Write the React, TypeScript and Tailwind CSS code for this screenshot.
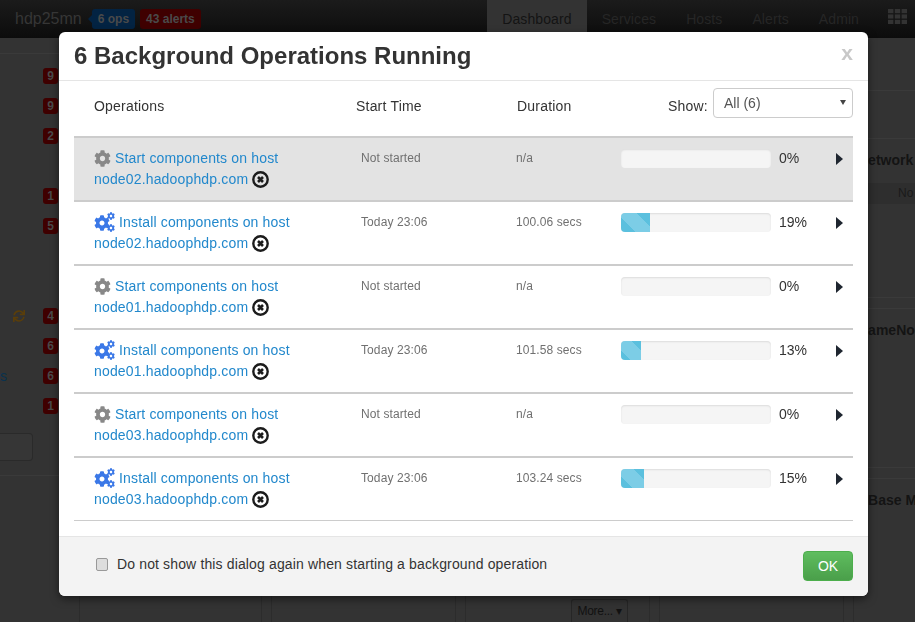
import { FaCog, FaSync } from 'react-icons/fa';

const NAV_ITEMS = ['Dashboard', 'Services', 'Hosts', 'Alerts', 'Admin'];

const OPERATIONS = [
    { kind: 'start', host: 'node02.hadoophdp.com', time: 'Not started', duration: 'n/a', percent: 0 },
    { kind: 'install', host: 'node02.hadoophdp.com', time: 'Today 23:06', duration: '100.06 secs', percent: 19 },
    { kind: 'start', host: 'node01.hadoophdp.com', time: 'Not started', duration: 'n/a', percent: 0 },
    { kind: 'install', host: 'node01.hadoophdp.com', time: 'Today 23:06', duration: '101.58 secs', percent: 13 },
    { kind: 'start', host: 'node03.hadoophdp.com', time: 'Not started', duration: 'n/a', percent: 0 },
    { kind: 'install', host: 'node03.hadoophdp.com', time: 'Today 23:06', duration: '103.24 secs', percent: 15 },
];

const SERVICE_BADGES = [
    { count: 9 },
    { count: 9 },
    { count: 2 },
    {},
    { count: 1 },
    { count: 5 },
    {},
    {},
    { count: 4, refresh: true },
    { count: 6 },
    { count: 6, label: 's' },
    { count: 1 },
];

function InstallIcon() {
    return (
        <span className="relative inline-block w-[21px] h-[20px] align-[-5px] text-[#3b78e7]">
            <FaCog className="absolute left-0 top-[3px] w-[16px] h-[16px]" />
            <FaCog className="absolute left-[13px] top-0 w-[8px] h-[8px]" />
            <FaCog className="absolute left-[13px] top-[12px] w-[8px] h-[8px]" />
        </span>
    );
}

function AbortIcon() {
    return (
        <svg viewBox="0 0 17 17" className="inline-block w-[17px] h-[17px] ml-[4px] align-[-4px]">
            <circle cx="8.5" cy="8.5" r="7.2" fill="none" stroke="#1c1c1c" strokeWidth="2.4" />
            <path d="M6 6l5 5M11 6l-5 5" stroke="#1c1c1c" strokeWidth="2.6" />
        </svg>
    );
}

function OperationRow({ op, index }: { op: (typeof OPERATIONS)[number]; index: number }) {
    return (
        <div className={`grid grid-cols-[287px_155px_105px_158px_57px_1fr] h-[64px] border-t-2 border-[#ccc] pt-[10px] ${index === 0 ? 'bg-[#e3e3e3]' : ''}`}>
            <div className="pl-[20px] text-[14px] leading-[21px] tracking-[0.16px] text-[#2288cc]">
                {op.kind === 'start' ? (
                    <FaCog className="inline-block w-[17px] h-[17px] mr-[4px] align-[-4px] text-[#888]" />
                ) : (
                    <span className="mr-[4px]">
                        <InstallIcon />
                    </span>
                )}
                {op.kind === 'start' ? 'Start components on host' : 'Install components on host'}
                <br />
                {op.host}
                <AbortIcon />
            </div>
            <div className="text-[12px] leading-[21px] tracking-[0.1px] text-[#707070]">{op.time}</div>
            <div className="text-[12px] leading-[21px] tracking-[0.1px] text-[#707070]">{op.duration}</div>
            <div className="mt-[1px] w-[150px] h-[19px] rounded-[4px] bg-[#f5f5f5] shadow-[inset_0_1px_2px_rgba(0,0,0,0.1)] overflow-hidden">
                <div
                    className="h-full bg-[linear-gradient(45deg,#5bc0de_25%,#7ccde6_25%,#7ccde6_50%,#5bc0de_50%,#5bc0de_75%,#7ccde6_75%)] bg-[length:40px_40px] bg-bottom"
                    style={{ width: `${op.percent}%` }}
                />
            </div>
            <div className="text-[14px] leading-[21px] text-[#333]">{op.percent}%</div>
            <div className="pt-[5px]">
                <svg viewBox="0 0 7 12" className="w-[7px] h-[12px]">
                    <path d="M0 0l7 6-7 6z" fill="#1f2630" />
                </svg>
            </div>
        </div>
    );
}

function OperationsDialog() {
    return (
        <div className="fixed inset-0 z-10">
            <div className="mt-[32px] ml-[59px] w-[809px] h-[564px] flex flex-col rounded-[6px] bg-white shadow-[0_3px_9px_rgba(0,0,0,0.5)]">
                <div className="flex items-center justify-between h-[49px] border-b border-[#e5e5e5] pl-[15px] pr-[15px]">
                    <h3 className="text-[24px] font-bold text-[#333] -mt-[1px]">6 Background Operations Running</h3>
                    <span className="text-[21px] font-bold text-[#c8c8c8] leading-none -mt-[7px]">x</span>
                </div>

                <div className="flex-1 px-[15px]">
                    <div className="flex h-[55px] text-[14px] tracking-[0.2px] text-[#333]">
                        <div className="w-[282px] pl-[20px] pt-[15px]">Operations</div>
                        <div className="w-[161px] pt-[15px]">Start Time</div>
                        <div className="w-[151px] pt-[15px]">Duration</div>
                        <div className="w-[45px] pt-[15px]">Show:</div>
                        <div className="relative mt-[7px] w-[140px] h-[30px]">
                            <select className="appearance-none w-full h-full pl-[10px] rounded-[4px] border border-[#ccc] bg-white text-[14px] tracking-normal text-[#555]">
                                <option>All (6)</option>
                            </select>
                            <span className="absolute right-[7px] top-[12px] w-0 h-0 border-x-[3px] border-x-transparent border-t-[5px] border-t-[#444]" />
                        </div>
                    </div>
                    {OPERATIONS.map((op, i) => (
                        <OperationRow key={i} op={op} index={i} />
                    ))}
                    <div className="border-t border-[#ccc]" />
                </div>

                <div className="flex items-start justify-between h-[60px] border-t border-[#e5e5e5] bg-[#f3f3f3] rounded-b-[6px] pl-[37px] pr-[15px] pt-[14px]">
                    <label className="flex items-center gap-[9px] mt-[3px] text-[14px] tracking-[0.14px] text-[#333]">
                        <input type="checkbox" className="appearance-none w-[12px] h-[13px] rounded-[2px] border border-[#999] bg-[#ddd]" />
                        Do not show this dialog again when starting a background operation
                    </label>
                    <button className="w-[50px] h-[30px] rounded-[4px] border border-[#4cae4c] bg-gradient-to-b from-[#5fbd5f] to-[#4a9f4a] text-[14px] text-white">
                        OK
                    </button>
                </div>
            </div>
        </div>
    );
}

function BackgroundPage() {
    return (
        <div className="flex flex-col h-[622px] w-[915px] overflow-hidden bg-[#333]">
            <header className="flex items-stretch justify-between h-[38px] bg-gradient-to-b from-[#1b1b1b] to-[#0c0c0c] pl-[15px] pr-[8px]">
                <div className="flex items-center">
                    <span className="text-[16px] text-[#363636]">hdp25mn</span>
                    <span className="relative ml-[10px] h-[20px] px-[6px] flex items-center rounded-[3px] bg-[#032342] text-[12px] font-bold text-[#4a4a4a]">
                        <span className="absolute -left-[4px] top-[6px] w-0 h-0 border-y-[4px] border-y-transparent border-r-[4px] border-r-[#032342]" />
                        6 ops
                    </span>
                    <span className="ml-[5px] h-[20px] px-[6px] flex items-center rounded-[3px] bg-[#3f0000] text-[12px] font-bold text-[#4a4a4a]">
                        43 alerts
                    </span>
                </div>
                <nav className="flex items-stretch">
                    {NAV_ITEMS.map((item) => (
                        <span
                            key={item}
                            className={`flex items-center px-[15px] text-[14px] tracking-[0.1px] ${item === 'Dashboard' ? 'bg-[#333] text-[#141414]' : 'text-[#262626]'}`}
                        >
                            {item}
                        </span>
                    ))}
                    <span className="flex items-start pl-[14px] pt-[9px]">
                        <svg viewBox="0 0 19 15" className="w-[19px] h-[15px]" fill="#333">
                            <rect x="0" y="0" width="5.4" height="4.2" />
                            <rect x="6.8" y="0" width="5.4" height="4.2" />
                            <rect x="13.6" y="0" width="5.4" height="4.2" />
                            <rect x="0" y="5.4" width="5.4" height="4.2" />
                            <rect x="6.8" y="5.4" width="5.4" height="4.2" />
                            <rect x="13.6" y="5.4" width="5.4" height="4.2" />
                            <rect x="0" y="10.8" width="5.4" height="4.2" />
                            <rect x="6.8" y="10.8" width="5.4" height="4.2" />
                            <rect x="13.6" y="10.8" width="5.4" height="4.2" />
                        </svg>
                    </span>
                </nav>
            </header>

            <div className="flex flex-1">
                <aside className="w-[70px] shrink-0 flex flex-col">
                    <div className="h-[16px] shrink-0 border-b border-[#3a3a3a]" />
                    <div className="h-[7px] shrink-0" />
                    {SERVICE_BADGES.map((row, i) => (
                        <div key={i} className="relative flex items-center justify-end h-[30px] pr-[12px]">
                            {row.label && <span className="absolute left-0 text-[14px] text-[#08324f]">{row.label}</span>}
                            {row.refresh && <FaSync className="absolute left-[13px] w-[12px] h-[12px] text-[#5a3e0a]" />}
                            {row.count && (
                                <span className="w-[15px] h-[16px] flex items-center justify-center rounded-[3px] bg-[#3f0000] text-[12px] font-bold text-[#4a4a4a]">
                                    {row.count}
                                </span>
                            )}
                        </div>
                    ))}
                    <div className="mt-[12px] w-[33px] h-[28px] rounded-r-[4px] border border-l-0 border-[#2a2a2a] bg-[#363636]" />
                    <div className="mt-[14px] border-t border-[#3a3a3a]" />
                </aside>

                <main className="flex-1 flex flex-col justify-end">
                    <div className="grid grid-cols-[183px_185px_185px_185px] gap-[9px] pl-[9px] h-[40px]">
                        <div className="border-x border-[#2c2c2c]" />
                        <div className="border-x border-[#2c2c2c]" />
                        <div className="flex justify-end items-end border-x border-[#2c2c2c] pr-[21px]">
                            <span className="w-[57px] h-[23px] flex items-center justify-center rounded-t-[3px] border border-b-0 border-[#262626] bg-[#323232] text-[12px] tracking-[-0.3px] text-[#111]">
                                More... ▾
                            </span>
                        </div>
                        <div className="border-x border-[#2c2c2c]" />
                    </div>
                </main>

                <div className="w-[62px] shrink-0 flex flex-col text-[14px] font-bold text-[#141414] border-l border-[#2c2c2c] whitespace-nowrap overflow-hidden">
                    <div className="h-[53px] shrink-0 border-b border-[#3a3a3a]" />
                    <div className="h-[48px] shrink-0 border-b border-[#3a3a3a]" />
                    <div className="h-[44px] shrink-0 pl-[4px] pt-[11px]">Network</div>
                    <div className="h-[21px] shrink-0 pl-[44px] bg-[#2e2e2e] font-normal text-[12px] leading-[21px] text-[#1a1a1a]">No</div>
                    <div className="h-[94px] shrink-0 border-b border-[#3a3a3a]" />
                    <div className="h-[11px] shrink-0 border-b border-[#3a3a3a]" />
                    <div className="h-[159px] shrink-0 pl-[4px] pt-[11px] border-b border-[#3a3a3a]">NameNode</div>
                    <div className="h-[11px] shrink-0 border-b border-[#3a3a3a]" />
                    <div className="pl-[4px] pt-[11px]">HBase Master</div>
                </div>
            </div>
        </div>
    );
}

export default function App() {
    return (
        <div className="font-['Liberation_Sans',Arial,sans-serif]">
            <BackgroundPage />
            <OperationsDialog />
        </div>
    );
}
